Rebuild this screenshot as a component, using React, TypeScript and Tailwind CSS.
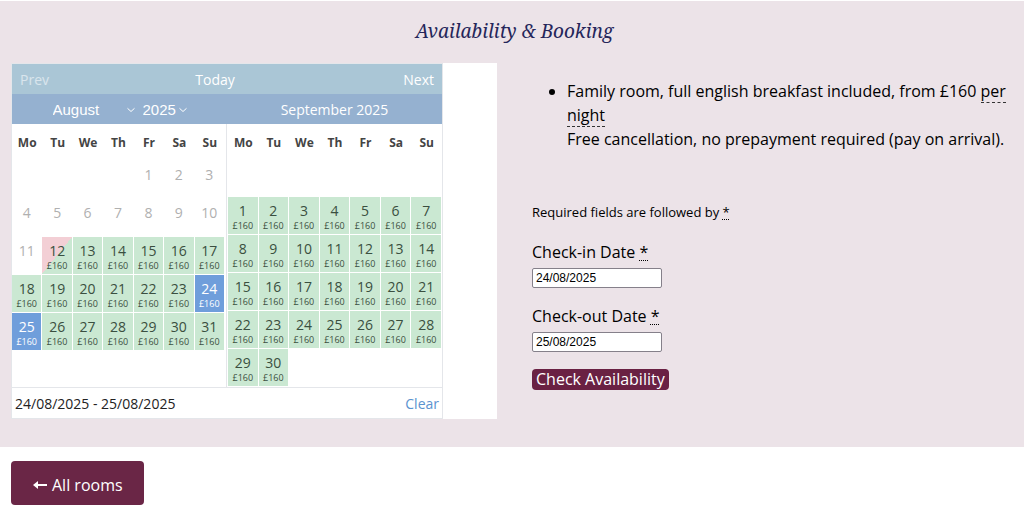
import React, { useState } from 'react';

type DayState = 'past' | 'free' | 'checkout' | 'selected';

interface Day {
    number: number;
    state: DayState;
}

interface MonthTableProps {
    label: string;
    weeks: (Day | null)[][];
    className: string;
}

const PRICE = '£160';
const WEEKDAYS = ['Mo', 'Tu', 'We', 'Th', 'Fr', 'Sa', 'Su'];

const STATE_CLASSES: Record<DayState, string> = {
    past: 'text-[#b0b0b0]',
    free: 'bg-[#cae8d2] text-[#3a4f40]',
    checkout: 'bg-[linear-gradient(to_bottom_right,#f3cfd5_50%,#cae8d2_50%)] text-[#3a4f40]',
    selected: 'bg-[#6f9edb] text-white',
};

// offset is the number of blank cells before the first of the month
const buildWeeks = (total: number, offset: number, stateOf: (day: number) => DayState) => {
    const cells: (Day | null)[] = Array.from({ length: offset }, () => null);
    for (let number = 1; number <= total; number++) {
        cells.push({ number, state: stateOf(number) });
    }
    while (cells.length % 7 !== 0) cells.push(null);
    return Array.from({ length: cells.length / 7 }, (_, week) => cells.slice(week * 7, week * 7 + 7));
};

const augustState = (day: number): DayState => {
    if (day < 12) return 'past';
    if (day === 12) return 'checkout';
    if (day === 24 || day === 25) return 'selected';
    return 'free';
};

const august = buildWeeks(31, 4, augustState);
const september = buildWeeks(30, 7, () => 'free');

const MonthTable: React.FC<MonthTableProps> = ({ label, weeks, className }) => (
    <div className={className}>
        <table aria-label={label} className="w-full table-fixed border-collapse text-center">
            <thead>
                <tr className="h-9">
                    {WEEKDAYS.map((day) => (
                        <th key={day} className="text-xs font-bold text-[#444]">{day}</th>
                    ))}
                </tr>
            </thead>
            <tbody>
                {weeks.map((week, row) => (
                    <tr key={row} className={week.some(Boolean) ? 'h-[38px]' : 'h-9'}>
                        {week.map((day, col) => (
                            <td key={col} className="p-0 pr-px pb-px">
                                {day && (
                                    <button
                                        type="button"
                                        disabled={day.state === 'past'}
                                        className={`flex h-[37px] w-full flex-col items-center pt-1 ${STATE_CLASSES[day.state]}`}
                                    >
                                        <span className="text-sm leading-5">{day.number}</span>
                                        {day.state !== 'past' && <span className="text-[9px] leading-[10px]">{PRICE}</span>}
                                    </button>
                                )}
                            </td>
                        ))}
                    </tr>
                ))}
            </tbody>
        </table>
    </div>
);

const Chevron: React.FC = () => (
    <svg className="pointer-events-none absolute right-0 top-1/2 h-2 w-2 -translate-y-1/2" viewBox="0 0 8 8" fill="none" stroke="currentColor">
        <path d="M0.5 2.3l3.5 3.2 3.5-3.2" />
    </svg>
);

const Calendar: React.FC = () => (
    <div className="max-w-[432px] border border-[#e4e6ea] text-sm">
        <div className="grid h-[30px] grid-cols-3 items-center bg-[#aac6d6] px-2 pt-0.5 text-white">
            <a href="#prev" className="text-white/55">Prev</a>
            <a href="#today" className="pr-6 text-center">Today</a>
            <a href="#next" className="text-right">Next</a>
        </div>
        <div className="grid h-[30px] grid-cols-2 items-center bg-[#95b1d0] pt-0.5 text-white">
            <div className="flex justify-center gap-2 font-['Liberation_Sans',sans-serif] text-[15px]">
                <div className="relative w-[82px]">
                    <select aria-label="Month" defaultValue="August" className="w-full appearance-none bg-transparent">
                        <option>August</option>
                        <option>September</option>
                    </select>
                    <Chevron />
                </div>
                <div className="relative w-11">
                    <select aria-label="Year" defaultValue="2025" className="w-full appearance-none bg-transparent">
                        <option>2025</option>
                        <option>2026</option>
                    </select>
                    <Chevron />
                </div>
            </div>
            <div className="text-center">September 2025</div>
        </div>
        <div className="grid grid-cols-2">
            <MonthTable label="August 2025" weeks={august} className="border-r border-[#e4e6ea] pr-px pt-px" />
            <MonthTable label="September 2025" weeks={september} className="pl-px pt-px" />
        </div>
        <div className="flex h-[31px] items-center justify-between border-t border-[#e4e6ea] px-[3px] pt-0.5 text-[#222]">
            <span>24/08/2025 - 25/08/2025</span>
            <button type="button" className="text-[#5b93cf]">Clear</button>
        </div>
    </div>
);

const Required: React.FC = () => (
    <abbr title="required" className="underline decoration-dotted decoration-1 underline-offset-2">*</abbr>
);

const BookingForm: React.FC = () => {
    const [checkIn, setCheckIn] = useState('24/08/2025');
    const [checkOut, setCheckOut] = useState('25/08/2025');
    const inputClass = "block h-5 w-[130px] rounded-xs border border-[#85808a] bg-white px-[3px] font-['Liberation_Sans',sans-serif] text-xs text-black";

    return (
        <form onSubmit={(e) => e.preventDefault()}>
            <p className="mb-[18px] text-[13px] leading-5">Required fields are followed by <Required /></p>
            <div className="mb-4">
                <label htmlFor="check-in" className="block leading-6">Check-in Date <Required /></label>
                <input id="check-in" type="text" value={checkIn} onChange={(e) => setCheckIn(e.target.value)} className={`mt-1 ${inputClass}`} />
            </div>
            <div className="mb-4">
                <label htmlFor="check-out" className="block leading-6">Check-out Date <Required /></label>
                <input id="check-out" type="text" value={checkOut} onChange={(e) => setCheckOut(e.target.value)} className={`mt-1 ${inputClass}`} />
            </div>
            <button type="submit" className="mt-[17px] block rounded bg-[#6a2143] px-1 leading-[21px] text-white">Check Availability</button>
        </form>
    );
};

const App: React.FC = () => (
    <div className="bg-white pt-px font-['Open_Sans','Noto_Sans',sans-serif] text-base text-black">
        <section className="bg-[#ece3e8] pt-4 pr-[6px] pb-7 pl-[11px]">
            <h2 className="text-center font-['Noto_Serif','Liberation_Serif',serif] text-[19px] leading-7 text-[#25265a] italic">Availability &amp; Booking</h2>
            <div className="mt-[18px] grid grid-cols-2 gap-[35px]">
                <div className="bg-white">
                    <Calendar />
                </div>
                <div className="pt-4">
                    <ul className="mb-[51px] list-disc pl-[35px] leading-6">
                        <li>
                            Family room, full english breakfast included, from £160{' '}
                            <abbr title="price for one night" className="border-b border-dashed border-[#333] no-underline">per night</abbr>
                            <br />
                            Free cancellation, no prepayment required (pay on arrival).
                        </li>
                    </ul>
                    <BookingForm />
                </div>
            </div>
        </section>
        <div className="px-[11px] py-[14px]">
            <a href="#rooms" className="inline-flex h-11 items-center gap-1 rounded bg-[#6a2646] px-[21px] pt-1 text-white">
                <svg className="h-4 w-4" viewBox="0 0 16 16" fill="currentColor">
                    <path d="M1 8l5-4v3h9v2H6v3z" />
                </svg>
                All rooms
            </a>
        </div>
    </div>
);

export default App;
